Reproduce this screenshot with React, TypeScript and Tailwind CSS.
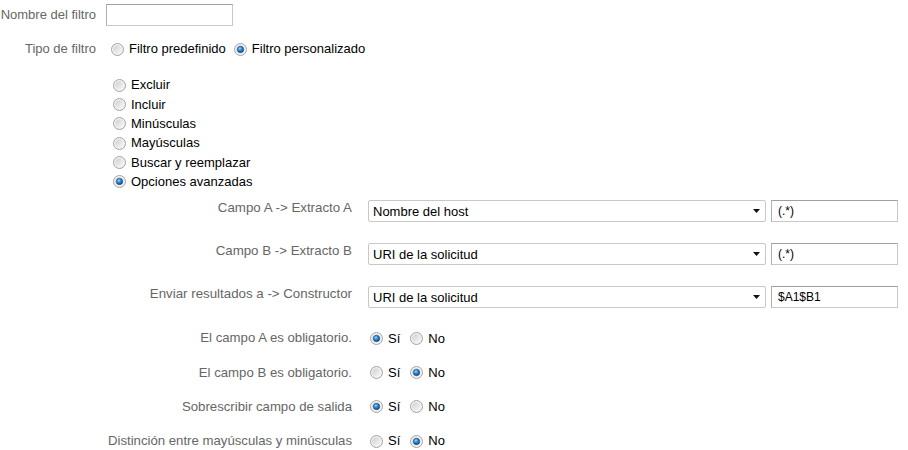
import React from "react";

function Radio({ checked = false }: { checked?: boolean }) {
  return (
    <svg width="13" height="13" viewBox="0 0 13 13" className="shrink-0">
      <defs>
        <linearGradient id="rOff" x1="0" y1="0" x2="1" y2="1">
          <stop offset="0" stopColor="#cfcfcf" />
          <stop offset="1" stopColor="#fafafa" />
        </linearGradient>
        <radialGradient id="rOn" cx="0.4" cy="0.35" r="0.7">
          <stop offset="0" stopColor="#9fd8ff" />
          <stop offset="0.45" stopColor="#2b87d0" />
          <stop offset="1" stopColor="#0c3f73" />
        </radialGradient>
      </defs>
      <circle cx="6.5" cy="6.5" r="6" fill="#f2f2f2" stroke="#a3a3a3" strokeWidth="1" />
      <circle cx="6.5" cy="6.5" r="4.3" fill="url(#rOff)" />
      {checked && <circle cx="6.5" cy="6.5" r="3.2" fill="url(#rOn)" stroke="#1c4f80" strokeWidth="0.6" />}
    </svg>
  );
}

function Option({ label, checked }: { label: string; checked?: boolean }) {
  return (
    <span className="flex items-center">
      <span className="ml-[5px] mr-[5px] flex">
        <Radio checked={checked} />
      </span>
      <span className="text-black">{label}</span>
    </span>
  );
}

function Arrow() {
  return (
    <svg width="7" height="4" viewBox="0 0 7 4">
      <path d="M0 0h7L3.5 4z" fill="#111" />
    </svg>
  );
}

const extractRows = [
  { label: "Campo A -> Extracto A", field: "Nombre del host", value: "(.*)" },
  { label: "Campo B -> Extracto B", field: "URI de la solicitud", value: "(.*)" },
  { label: "Enviar resultados a -> Constructor", field: "URI de la solicitud", value: "$A1$B1" },
];

const flagRows = [
  { label: "El campo A es obligatorio.", yes: true },
  { label: "El campo B es obligatorio.", yes: false },
  { label: "Sobrescribir campo de salida", yes: true },
  { label: "Distinción entre mayúsculas y minúsculas", yes: false },
];

export default function App() {
  return (
    <div className="w-[908px] h-[450px] bg-white font-['Liberation_Sans',Arial,sans-serif] text-[13px] text-[#666] overflow-hidden">
      {/* nombre */}
      <div className="flex items-center pt-[4px]">
        <div className="w-[96px] text-right leading-[16px]">Nombre del filtro</div>
        <input
          className="ml-[10px] w-[127px] h-[22px] border border-[#c8c8c8] border-t-[#a0a0a0] border-l-[#b0b0b0] bg-white outline-none"
          defaultValue=""
        />
      </div>

      {/* tipo */}
      <div className="flex items-center mt-[13px] h-[20px]">
        <div className="w-[96px] text-right">Tipo de filtro</div>
        <div className="ml-[10px] flex items-center gap-[3px]">
          <Option label="Filtro predefinido" />
          <Option label="Filtro personalizado" checked />
        </div>
      </div>

      {/* opciones */}
      <div className="mt-[16.5px] ml-[108px] flex flex-col">
        {["Excluir", "Incluir", "Minúsculas", "Mayúsculas", "Buscar y reemplazar"].map((t) => (
          <div key={t} className="h-[19.3px] flex items-center">
            <Option label={t} />
          </div>
        ))}
        <div className="h-[19.3px] flex items-center">
          <Option label="Opciones avanzadas" checked />
        </div>
      </div>

      {/* extractos */}
      <div className="mt-[9px] flex flex-col gap-[21px]">
        {extractRows.map((r, i) => (
          <div key={i} className="flex items-start h-[22px]">
            <div className="w-[352px] text-right leading-[16px] text-[13.3px]">{r.label}</div>
            <div className="ml-[16px] w-[398px] h-[22px] border border-[#c8c8c8] rounded-[2px] bg-white flex items-center justify-between pl-[4px] pr-[5px] text-black">
              <span>{r.field}</span>
              <Arrow />
            </div>
            <div className="ml-[5px] w-[127px] h-[22px] border border-[#c8c8c8] border-t-[#a0a0a0] border-l-[#b0b0b0] bg-white flex items-center pl-[6px] text-[12px] text-black">
              {r.value}
            </div>
          </div>
        ))}
      </div>

      {/* banderas */}
      <div className="mt-[20px] flex flex-col gap-[14.3px]">
        {flagRows.map((r, i) => (
          <div key={i} className="flex items-center h-[20px]">
            <div className="w-[352px] text-right text-[13.2px]">{r.label}</div>
            <div className="ml-[13px] flex items-center gap-[5px]">
              <Option label="Sí" checked={r.yes} />
              <Option label="No" checked={!r.yes} />
            </div>
          </div>
        ))}
      </div>
    </div>
  );
}
